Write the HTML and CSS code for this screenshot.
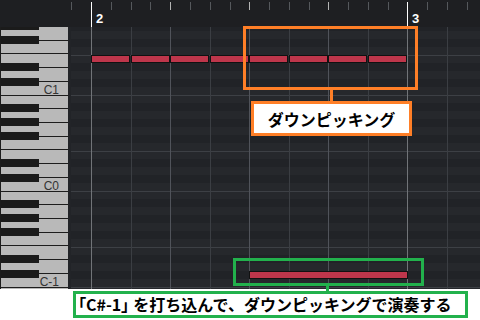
FILE: index.html
```html
<!DOCTYPE html>
<html lang="ja">
<head>
    <meta charset="UTF-8">
    <meta name="viewport" content="width=device-width, initial-scale=1.0">
    <title>ダウンピッキング</title>
    <link rel="stylesheet" href="styles.css">
</head>
<body>
    <div class="screen">
        <!-- ルーラー -->
        <div class="ruler-row">
            <div class="corner"></div>
            <svg class="ruler" width="412" height="27" viewBox="68 0 412 27" shape-rendering="crispEdges">
                <g fill="#55585c">
                    <rect x="71" y="2" width="1" height="8"/>
                    <rect x="111" y="2" width="1" height="8"/>
                    <rect x="131" y="2" width="1" height="8"/>
                    <rect x="150" y="2" width="1" height="8"/>
                    <rect x="190" y="2" width="1" height="8"/>
                    <rect x="210" y="2" width="1" height="8"/>
                    <rect x="230" y="2" width="1" height="8"/>
                    <rect x="269" y="2" width="1" height="8"/>
                    <rect x="289" y="2" width="1" height="8"/>
                    <rect x="309" y="2" width="1" height="8"/>
                    <rect x="348" y="2" width="1" height="8"/>
                    <rect x="368" y="2" width="1" height="8"/>
                    <rect x="388" y="2" width="1" height="8"/>
                    <rect x="427" y="2" width="1" height="8"/>
                    <rect x="447" y="2" width="1" height="8"/>
                    <rect x="467" y="2" width="1" height="8"/>
                </g>
                <g fill="#b4b4b4">
                    <rect x="170" y="2" width="1" height="8"/>
                    <rect x="249" y="2" width="1" height="8"/>
                    <rect x="328" y="2" width="1" height="8"/>
                </g>
                <g fill="#ffffff">
                    <rect x="91" y="2" width="1" height="25"/>
                    <rect x="407" y="2" width="1" height="25"/>
                </g>
                <text class="bar-num" x="96" y="23">2</text>
                <text class="bar-num" x="412" y="23">3</text>
            </svg>
        </div>

        <div class="roll">
            <!-- 鍵盤 -->
            <svg class="keys" width="68" height="262" viewBox="0 27 68 262" shape-rendering="crispEdges">
                <rect x="0" y="27" width="68" height="262" fill="#b9b9b9"/>
                <rect x="0" y="27" width="1" height="262" fill="#1d1d1d"/>
                <g fill="#1d1d1d">
                    <rect x="1" y="40" width="67" height="1"/>
                    <rect x="1" y="53" width="67" height="1"/>
                    <rect x="1" y="67" width="67" height="1"/>
                    <rect x="1" y="81" width="67" height="1"/>
                    <rect x="1" y="95" width="67" height="1"/>
                    <rect x="1" y="108" width="67" height="1"/>
                    <rect x="1" y="122" width="67" height="1"/>
                    <rect x="1" y="136" width="67" height="1"/>
                    <rect x="1" y="149" width="67" height="1"/>
                    <rect x="1" y="163" width="67" height="1"/>
                    <rect x="1" y="177" width="67" height="1"/>
                    <rect x="1" y="191" width="67" height="1"/>
                    <rect x="1" y="204" width="67" height="1"/>
                    <rect x="1" y="218" width="67" height="1"/>
                    <rect x="1" y="232" width="67" height="1"/>
                    <rect x="1" y="245" width="67" height="1"/>
                    <rect x="1" y="259" width="67" height="1"/>
                    <rect x="1" y="273" width="67" height="1"/>
                    <rect x="1" y="287" width="67" height="1"/>
                </g>
                <g fill="#1b1b1b">
                    <rect x="1" y="22" width="38" height="8"/>
                    <rect x="1" y="36" width="38" height="8"/>
                    <rect x="1" y="63" width="38" height="8"/>
                    <rect x="1" y="78" width="38" height="8"/>
                    <rect x="1" y="104" width="38" height="8"/>
                    <rect x="1" y="118" width="38" height="8"/>
                    <rect x="1" y="132" width="38" height="8"/>
                    <rect x="1" y="159" width="38" height="8"/>
                    <rect x="1" y="174" width="38" height="8"/>
                    <rect x="1" y="200" width="38" height="8"/>
                    <rect x="1" y="214" width="38" height="8"/>
                    <rect x="1" y="228" width="38" height="8"/>
                    <rect x="1" y="255" width="38" height="8"/>
                    <rect x="1" y="270" width="38" height="8"/>
                </g>
                <text class="key-label" x="59" y="94">C1</text>
                <text class="key-label" x="59" y="190">C0</text>
                <text class="key-label" x="59" y="286">C-1</text>
            </svg>

            <!-- グリッドとノート -->
            <svg class="grid" width="412" height="262" viewBox="68 27 412 262" shape-rendering="crispEdges">
                <defs>
                    <pattern id="rows" patternUnits="userSpaceOnUse" x="0" y="-1" width="480" height="96">
                        <rect x="0" y="0" width="480" height="96" fill="#26282c"/>
                        <g fill="#212327">
                            <rect x="0" y="8" width="480" height="8"/>
                            <rect x="0" y="24" width="480" height="8"/>
                            <rect x="0" y="40" width="480" height="8"/>
                            <rect x="0" y="64" width="480" height="8"/>
                            <rect x="0" y="80" width="480" height="8"/>
                        </g>
                        <g fill="#3d4045">
                            <rect x="0" y="0" width="480" height="1"/>
                            <rect x="0" y="56" width="480" height="1"/>
                        </g>
                    </pattern>
                </defs>
                <rect x="68" y="27" width="412" height="262" fill="#222428"/>
                <rect x="71" y="27" width="409" height="262" fill="url(#rows)"/>
                <g fill="#3b3e43">
                    <rect x="131" y="27" width="1" height="262"/>
                    <rect x="210" y="27" width="1" height="262"/>
                    <rect x="289" y="27" width="1" height="262"/>
                    <rect x="368" y="27" width="1" height="262"/>
                    <rect x="447" y="27" width="1" height="262"/>
                </g>
                <g fill="#50535a">
                    <rect x="170" y="27" width="1" height="262"/>
                    <rect x="249" y="27" width="1" height="262"/>
                    <rect x="328" y="27" width="1" height="262"/>
                </g>
                <g fill="#717478">
                    <rect x="91" y="27" width="1" height="262"/>
                    <rect x="407" y="27" width="1" height="262"/>
                </g>
                <g class="notes">
                    <rect x="91.5" y="55.5" width="38" height="7"/>
                    <rect x="131.5" y="55.5" width="38" height="7"/>
                    <rect x="170.5" y="55.5" width="38" height="7"/>
                    <rect x="210.5" y="55.5" width="38" height="7"/>
                    <rect x="249.5" y="55.5" width="38" height="7"/>
                    <rect x="289.5" y="55.5" width="38" height="7"/>
                    <rect x="328.5" y="55.5" width="38" height="7"/>
                    <rect x="368.5" y="55.5" width="38" height="7"/>
                    <rect x="249.5" y="271.5" width="158" height="7"/>
                </g>
            </svg>
        </div>

        <!-- 注釈 -->
        <div class="callout-box"></div>
        <div class="callout-stem"></div>
        <div class="callout-label">ダウンピッキング</div>
        <div class="focus-box"></div>
        <div class="focus-stem"></div>
    </div>

    <div class="caption-row">
        <div class="caption"><span class="bracket">「</span>C#-1<span class="bracket close">」</span>を打ち込んで、ダウンピッキングで演奏する</div>
    </div>
</body>
</html>
```

FILE: styles.css
```css
body {
    margin: 0;
    background: #ffffff;
    font-family: "Noto Sans CJK JP", sans-serif;
}
.screen {
    position: relative;
    width: 480px;
    height: 289px;
    background: #25282c;
}
.ruler-row {
    display: flex;
    height: 27px;
    background: #1e1f22;
}
.corner {
    width: 68px;
}
.ruler,
.keys,
.grid {
    display: block;
}
.bar-num {
    font-family: "Liberation Sans", sans-serif;
    font-weight: bold;
    font-size: 13px;
    fill: #ffffff;
}
.roll {
    display: flex;
    height: 262px;
}
.key-label {
    font-family: "Liberation Sans", sans-serif;
    font-size: 12px;
    fill: #333333;
    text-anchor: end;
}
.notes rect {
    shape-rendering: auto;
    fill: #be364b;
    stroke: #111111;
    stroke-width: 1px;
}

/* 注釈の枠 */
.callout-box,
.callout-stem,
.callout-label,
.focus-box,
.focus-stem {
    position: absolute;
    box-sizing: border-box;
}
.callout-box {
    left: 243px;
    top: 26px;
    width: 175px;
    height: 64px;
    border: 3px solid #ff7f27;
}
.callout-stem {
    left: 330px;
    top: 90px;
    width: 3px;
    height: 11px;
    background: #ff7f27;
}
.callout-label {
    left: 251px;
    top: 101px;
    width: 161px;
    height: 35px;
    border: 3px solid #ff7f27;
    background: #ffffff;
    display: flex;
    align-items: center;
    justify-content: center;
    font-size: 16px;
    font-weight: bold;
    color: #000000;
}
.focus-box {
    left: 233px;
    top: 258px;
    width: 191px;
    height: 28px;
    border: 3px solid #22b14c;
}
.focus-stem {
    left: 326px;
    top: 286px;
    width: 3px;
    height: 5px;
    background: #22b14c;
}

.caption-row {
    padding: 2px 0 0 73px;
}
.caption {
    box-sizing: border-box;
    width: 395px;
    height: 27px;
    border: 3px solid #22b14c;
    background: #ffffff;
    padding-left: 2px;
    font-size: 16px;
    font-weight: bold;
    line-height: 21px;
    white-space: nowrap;
    color: #000000;
}
.bracket {
    font-feature-settings: "palt";
}
.close {
    margin-right: 4px;
}
```
